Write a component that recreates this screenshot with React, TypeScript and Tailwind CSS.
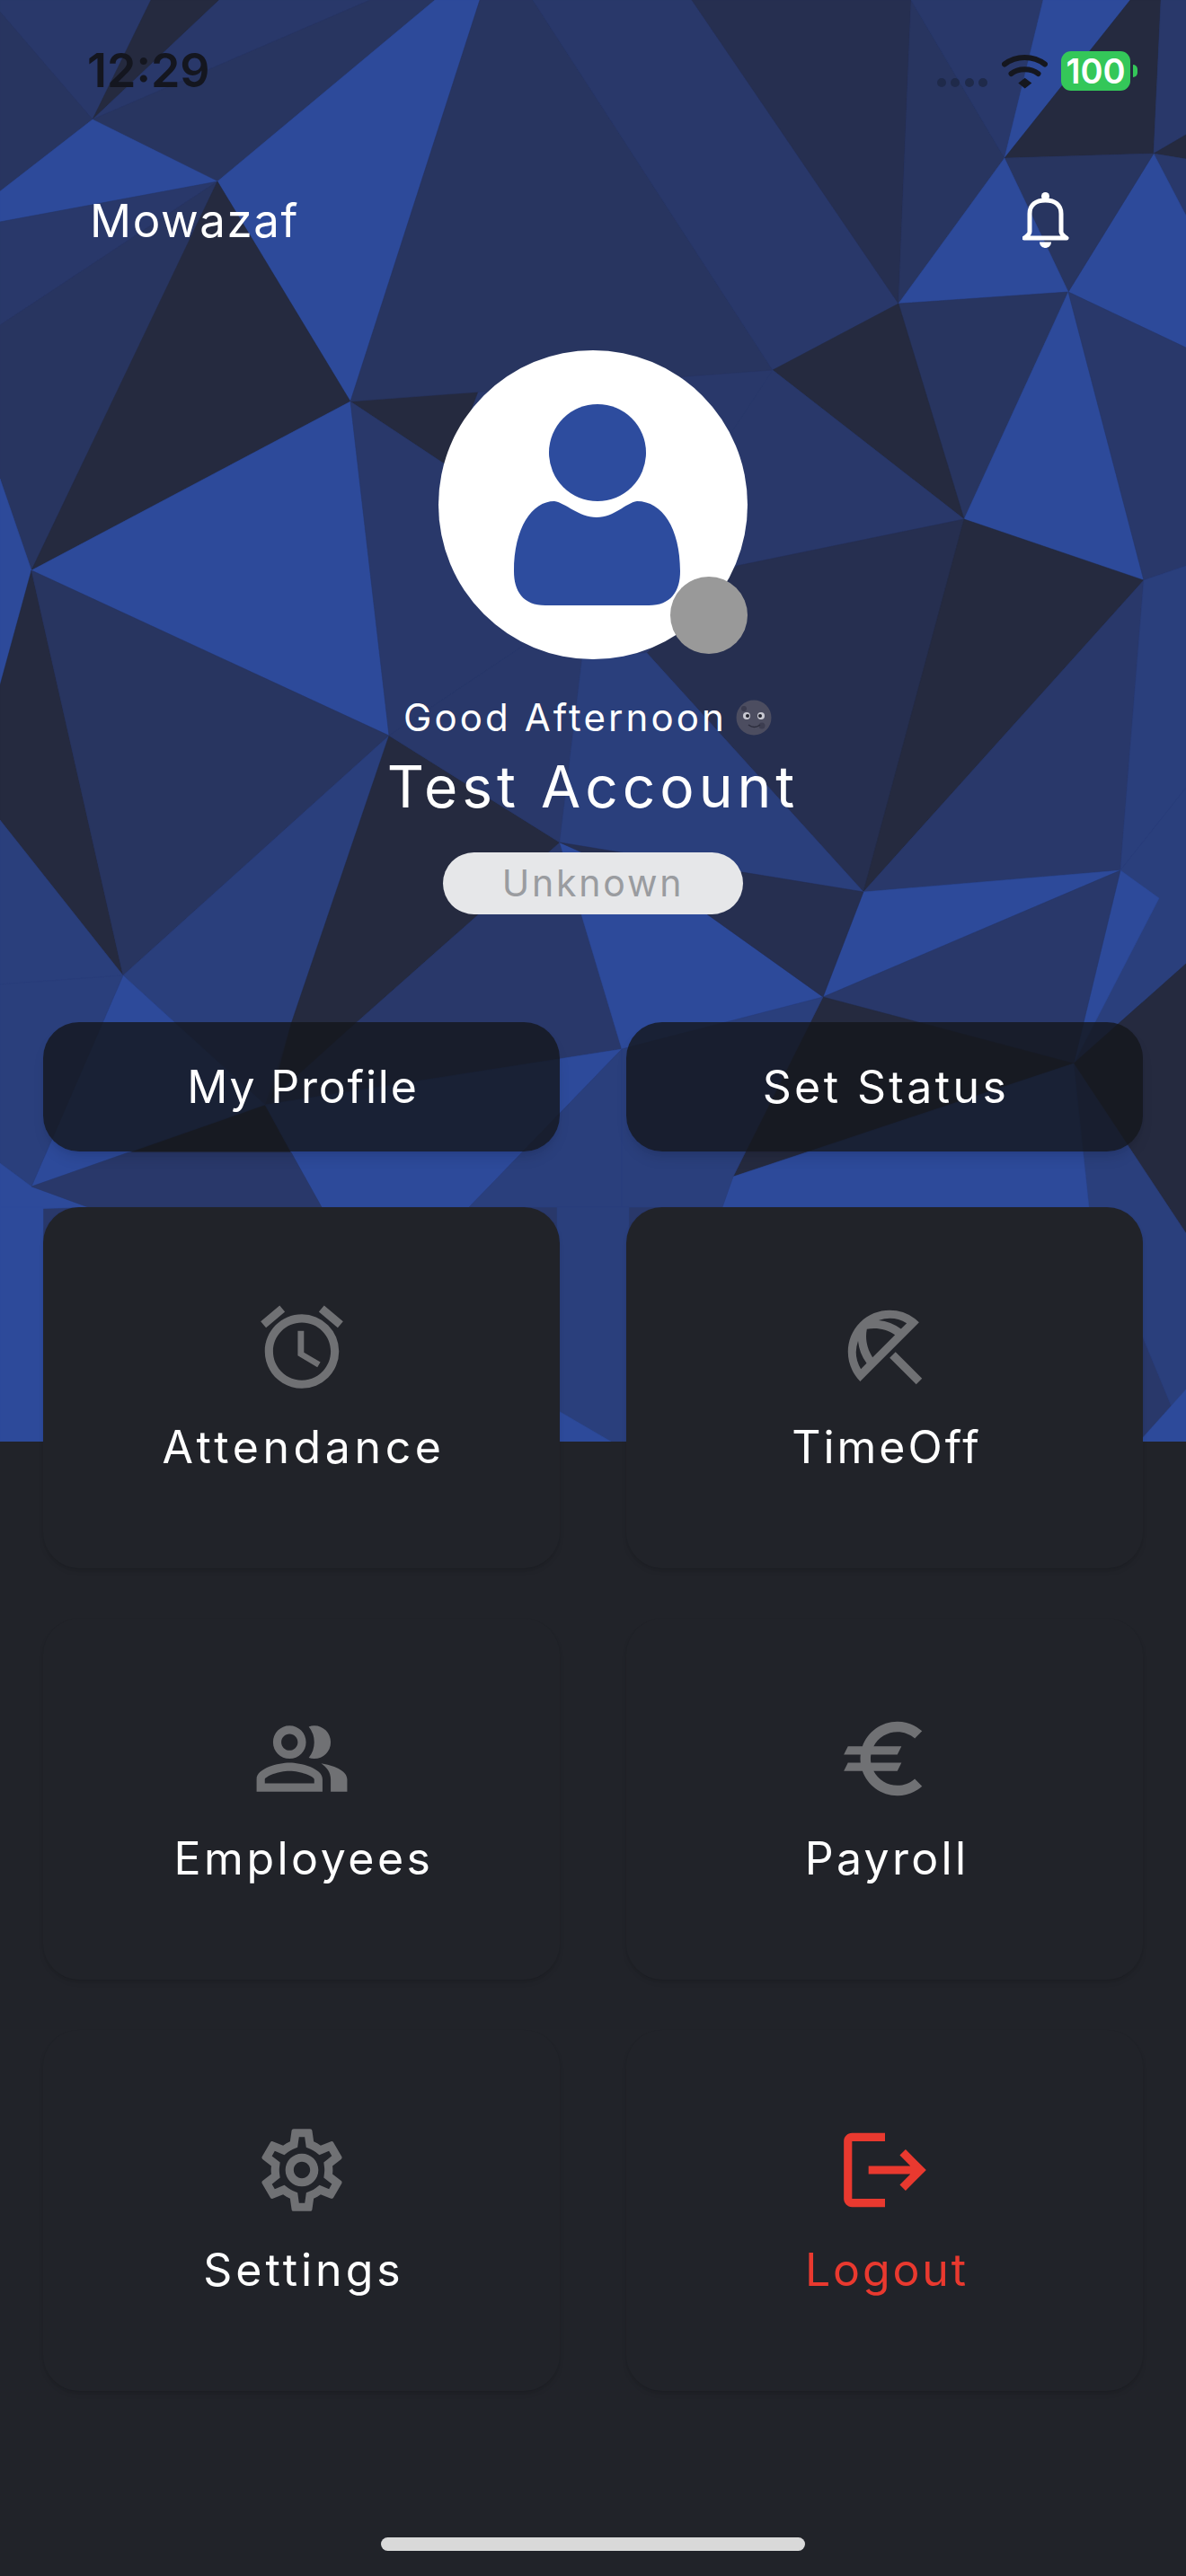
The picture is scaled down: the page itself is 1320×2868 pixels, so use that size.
import { MdOutlineAccessAlarm, MdOutlineBeachAccess, MdOutlinePeopleAlt, MdOutlineEuro, MdOutlineSettings } from 'react-icons/md'
import type { SVGProps } from 'react'

const B = '#2d4a9a'
const L = '#2a3f7c'
const M = '#29386a'
const N = '#283560'
const S = '#262f50'
const D = '#252a3f'

// the low-poly backdrop behind the top of the screen
const facets: [string, string][] = [
  [M, '0,0 168,0 103,133 0,13'],
  [N, '0,13 103,133 0,213'],
  [D, '168,0 244,0 103,133'],
  [M, '244,0 412,0 103,133'],
  [N, '412,0 484,0 242,202 103,133'],
  [B, '103,133 0,213 0,247 242,202'],
  [B, '484,0 534,0 390,447 242,202'],
  [M, '0,247 242,202 0,362'],
  [N, '0,362 242,202 35,635 0,533'],
  [D, '242,202 390,447 35,635'],
  [B, '35,635 390,447 433,819'],
  [D, '390,447 540,415 500,520'],
  [M, '390,447 500,520 581,720 433,819'],
  [N, '534,0 593,0 860,412 390,447'],
  [M, '593,0 770,0 1000,338 860,412'],
  [S, '770,0 1014,0 1000,338'],
  [N, '1014,0 1118,176 1000,338'],
  [M, '1014,0 1161,0 1118,176'],
  [B, '1161,0 1258,0 1118,176'],
  [D, '1258,0 1292,0 1284,171 1118,176'],
  [M, '1292,0 1320,0 1320,150 1284,171'],
  [D, '1284,171 1320,150 1320,177'],
  [M, '1284,171 1320,177 1320,240'],
  [B, '1284,171 1320,240 1320,387 1189,325'],
  [N, '1118,176 1284,171 1189,325'],
  [B, '1118,176 1189,325 1000,338'],
  [N, '1000,338 1189,325 1073,578'],
  [B, '1189,325 1273,646 1073,578'],
  [M, '1189,325 1320,387 1320,630 1273,646'],
  [D, '860,412 1000,338 1073,578'],
  [M, '860,412 1073,578 820,630 720,727 648,733'],
  [S, '820,630 1073,578 961,993 720,727'],
  [D, '1073,578 1273,646 961,993'],
  [M, '1273,646 1247,969 961,993'],
  [L, '1273,646 1320,630 1320,877 1247,969'],
  [L, '1247,969 1320,877 1320,1073 1195,1184'],
  [B, '1247,969 1290,1000 1195,1184'],
  [B, '961,993 1247,969 916,1110'],
  [M, '1247,969 1195,1184 916,1110'],
  [B, '0,533 35,635 0,763'],
  [D, '35,635 0,763 0,913 137,1086'],
  [N, '35,635 433,819 137,1086'],
  [L, '0,913 137,1086 0,1096'],
  [L, '433,819 137,1086 295,1230 324,1140'],
  [D, '433,819 623,938 395,1140 300,1230 324,1140'],
  [M, '433,819 623,938 648,733 581,720'],
  [L, '648,733 720,727 961,993 623,938'],
  [M, '623,938 692,1168 295,1230 395,1140'],
  [B, '623,938 762,1000 916,1110 692,1168'],
  [S, '623,938 961,993 916,1110 762,1000'],
  [D, '72,1277 295,1230 324,1283 143,1283'],
  [B, '137,1086 295,1230 35,1321'],
  [B, '295,1230 692,1168 581,1283 522,1344 358,1344 324,1283'],
  [L, '581,1283 692,1168 692,1344 522,1344'],
  [L, '0,1096 137,1086 35,1321 0,1295'],
  [B, '0,1295 35,1321 98,1344 0,1347'],
  [M, '35,1321 143,1283 324,1283 358,1344 98,1344'],
  [B, '0,1344 48,1344 48,1605 0,1605'],
  [D, '1195,1184 1320,1373 1320,1073'],
  [L, '1195,1184 1320,1373 1320,1605 1212,1344'],
  [D, '916,1110 1195,1184 816,1310'],
  [B, '816,1310 1195,1184 1212,1344 804,1344'],
  [L, '692,1168 916,1110 816,1310 804,1344 692,1344'],
  [L, '620,1344 700,1344 700,1605 620,1605'],
  [B, '620,1570 680,1605 620,1605'],
  [B, '1268,1605 1320,1547 1320,1605'],
]

// the outlined logout glyph, the icon set's own one has a shorter arrow
const LogoutIcon = (props: SVGProps<SVGSVGElement>) => (
  <svg width="110" height="110" viewBox="0 0 24 24" fill="currentColor" {...props}>
    <path d="M17 7l-1.41 1.41L18.17 11H8v2h10.17l-2.58 2.58L17 17l5-5zM4 5h8V3H4c-1.1 0-2 .9-2 2v14c0 1.1.9 2 2 2h8v-2H4V5z" />
  </svg>
)

const cards = [
  { label: 'Attendance', Icon: MdOutlineAccessAlarm, spacing: 'tracking-[4.6px]' },
  { label: 'TimeOff', Icon: MdOutlineBeachAccess, spacing: 'tracking-[3px]' },
  { label: 'Employees', Icon: MdOutlinePeopleAlt, spacing: 'tracking-[3.5px]' },
  { label: 'Payroll', Icon: MdOutlineEuro, spacing: 'tracking-[3.3px]' },
  { label: 'Settings', Icon: MdOutlineSettings, spacing: 'tracking-[4px]' },
  { label: 'Logout', Icon: LogoutIcon, spacing: 'tracking-[2.9px]', danger: true },
]

const StatusBar = () => (
  <div className="flex h-[170px] items-start justify-between pl-[97px] pr-[54px] pt-[52px]">
    <span className="text-[52px] leading-[54px] font-semibold text-[#14161f]">12:29</span>
    <div className="flex items-start pt-[5px]">
      <div className="mt-[30px] mr-[16px] flex gap-[5.5px]">
        <span className="h-[10px] w-[10px] rounded-full bg-[#1f2a4a]" />
        <span className="h-[10px] w-[10px] rounded-full bg-[#1f2a4a]" />
        <span className="h-[10px] w-[10px] rounded-full bg-[#1f2a4a]" />
        <span className="h-[10px] w-[10px] rounded-full bg-[#1f2a4a]" />
      </div>
      <svg width="51" height="40" viewBox="0 0 51 40" className="mt-[2px] mr-[15px]" fill="none">
        <path d="M3 12.5C16 2.5 35 2.5 48 12.5" stroke="#15171f" strokeWidth="6" strokeLinecap="round" />
        <path d="M10.5 23C18 16.5 33 16.5 40.5 23" stroke="#15171f" strokeWidth="6" strokeLinecap="round" />
        <path d="M18.3 33.5 25.7 27.7 33.3 33.5 25.7 39.5Z" fill="#15171f" />
      </svg>
      <div className="flex h-[44px] w-[77px] items-center justify-center rounded-[11px] bg-[#34c759] text-[38px] leading-none font-semibold text-white">100</div>
      <span className="mt-[15px] ml-[3px] h-[14px] w-[5px] rounded-r-full bg-[#34c759]" />
    </div>
  </div>
)

const Bell = () => (
  <svg width="52" height="62" viewBox="0 0 52 62" fill="none">
    <circle cx="25.5" cy="4.5" r="4.5" fill="#fff" />
    <path d="M8 44V24C8 14 15 9 25.5 9C36 9 43 14 43 24V44C43 47 46 49 49 51H2C5 49 8 47 8 44Z" stroke="#fff" strokeWidth="5" strokeLinejoin="round" />
    <path d="M19 55.5H32C32 60 28 62 25.5 62C23 62 19 60 19 55.5Z" fill="#fff" />
  </svg>
)

const Moon = () => (
  <svg width="40" height="40" viewBox="0 0 40 40" className="ml-[10px]">
    <circle cx="20" cy="20" r="19.5" fill="#4c4d60" />
    <circle cx="9" cy="10" r="3" fill="#3a3b4e" />
    <circle cx="29" cy="29" r="3.5" fill="#3c3d50" />
    <circle cx="12" cy="18" r="4" fill="#c9c9d2" />
    <circle cx="28" cy="18" r="4" fill="#c9c9d2" />
    <circle cx="13" cy="18" r="2" fill="#22232f" />
    <circle cx="27" cy="18" r="2" fill="#22232f" />
    <path d="M14 28C18 31 23 31 27 28" stroke="#2c2d3d" strokeWidth="1.5" fill="none" />
  </svg>
)

const App = () => {
  return (
    <div className="relative min-h-[2868px] w-[1320px] overflow-hidden bg-[#212329] font-['Inter','Liberation_Sans',sans-serif]">
      <svg width="1320" height="1605" viewBox="0 0 1320 1605" className="absolute top-0 left-0">
        <rect width="1320" height="1605" fill={M} />
        {facets.map(([fill, points], i) => (
          <polygon key={i} fill={fill} stroke={fill} strokeWidth="0.5" points={points} />
        ))}
      </svg>

      <div className="relative">
        <StatusBar />

        <div className="flex h-[150px] items-center justify-between pr-[130px] pl-[100px]">
          <span className="text-[51px] leading-none font-normal tracking-[1.6px] text-white">Mowazaf</span>
          <Bell />
        </div>

        <div className="mt-[70px] flex flex-col items-center">
          <div className="relative h-[344px] w-[344px] rounded-full bg-white">
            <div className="flex flex-col items-center pt-[60px] pl-[9px]">
              <div className="h-[108px] w-[108px] rounded-full bg-[#2d4c9e]" />
              <svg width="185" height="116" viewBox="0 0 185 116">
                <path d="M45 0C58 2 72 18 92 18C112 18 124 2 137 0C165 0 185 30 185 78C185 100 175 116 150 116H35C10 116 0 100 0 78C0 30 20 0 45 0Z" fill="#2d4c9e" />
              </svg>
            </div>
            <span className="absolute right-0 bottom-[6px] h-[86px] w-[86px] rounded-full bg-[#999999]" />
          </div>

          <div className="mt-[40px] flex h-[50px] items-center pr-[12px]">
            <span className="text-[42px] leading-none font-normal tracking-[3.1px] text-white">Good Afternoon</span>
            <Moon />
          </div>
          <div className="mt-[12px] text-[64px] leading-[80px] font-normal tracking-[5px] text-white">Test Account</div>
          <div className="mt-[33px] flex h-[69px] w-[334px] items-center justify-center rounded-full bg-[#e6e7e9] text-[41px] leading-none font-normal tracking-[2.8px] text-[#9a9ca0]">Unknown</div>
        </div>

        <div className="mt-[120px] grid grid-cols-2 gap-x-[74px] px-[48px]">
          <div className="flex h-[144px] items-center justify-center rounded-[40px] bg-[#14161c]/80 pl-[3px] text-[50px] font-normal tracking-[1.8px] text-white shadow-lg">My Profile</div>
          <div className="flex h-[144px] items-center justify-center rounded-[40px] bg-[#14161c]/80 pl-[3px] text-[50px] font-normal tracking-[3.4px] text-white shadow-lg">Set Status</div>
        </div>

        <div className="mt-[62px] grid grid-cols-2 gap-x-[74px] gap-y-[56px] px-[48px]">
          {cards.map(({ label, Icon, spacing, danger }) => (
            <div key={label} className="flex h-[402px] flex-col items-center rounded-[40px] bg-[#212329] pt-[101px] shadow-md">
              <Icon size={110} className={danger ? 'text-[#e9392f]' : 'text-[#707174]'} />
              <span className={`mt-[26px] pl-[5px] text-[50px] leading-[60px] font-normal ${spacing} ${danger ? 'text-[#e9392f]' : 'text-white'}`}>{label}</span>
            </div>
          ))}
        </div>

        <div className="mt-[163px] flex justify-center">
          <span className="h-[15px] w-[472px] rounded-full bg-[#d9d9d9]" />
        </div>
      </div>
    </div>
  )
}

export default App
